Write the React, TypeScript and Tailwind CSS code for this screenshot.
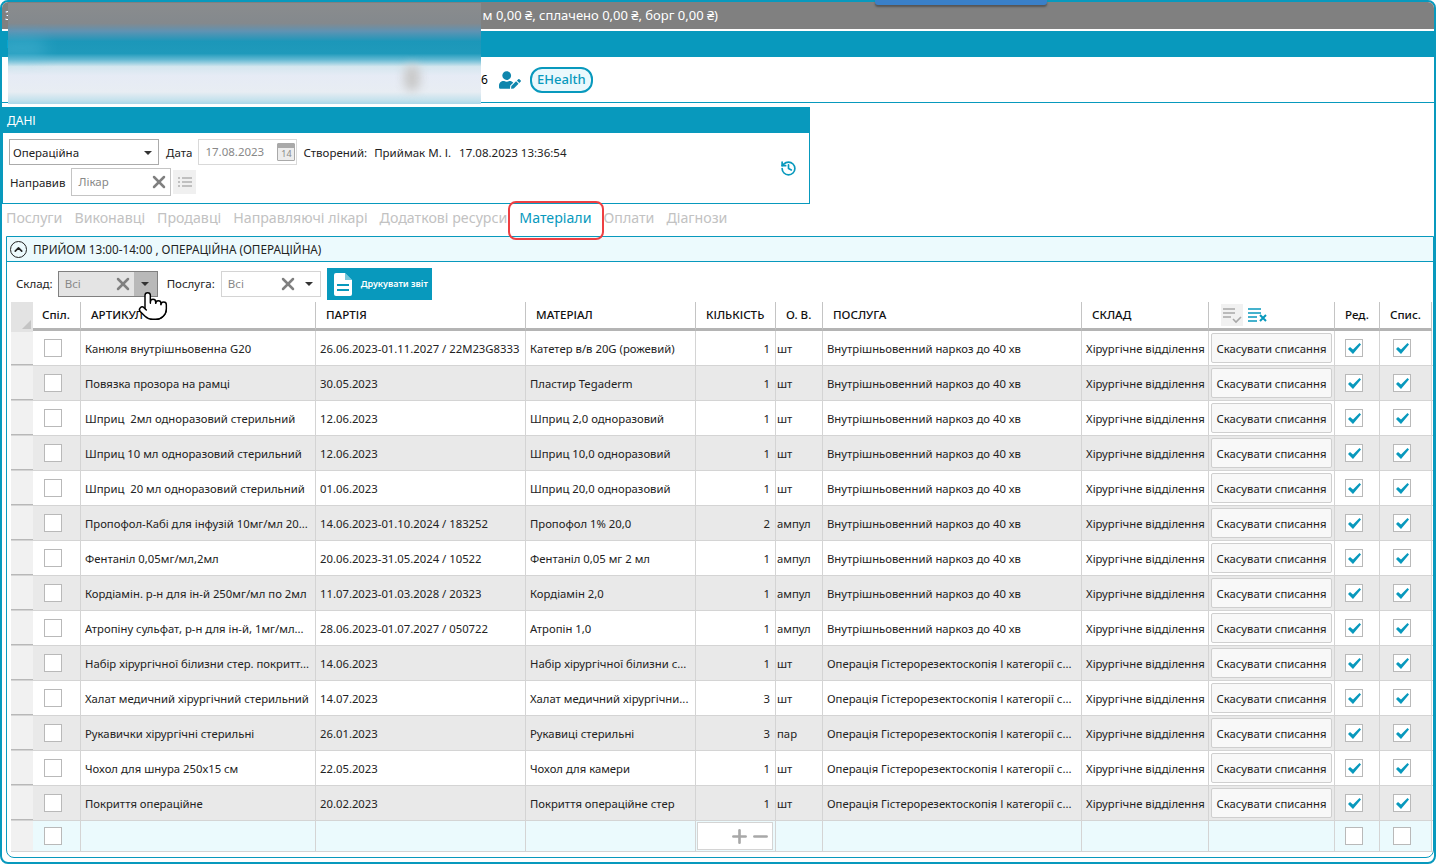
import { Plus, Minus, X, History, Pointer, ChevronUp } from "lucide-react";
import { FaUserEdit } from "react-icons/fa";

const GRID =
  "grid grid-cols-[22px_48px_235px_210px_170px_80px_47px_259px_127px_126px_45px_52px]";

type Row = [string, string, string, string, string, string];

const S1 = "Внутрішньовенний наркоз до 40 хв";
const S2 = "Операція Гістерорезектоскопія І категорії с...";

const rows: Row[] = [
  ["Канюля внутрішньовенна G20", "26.06.2023-01.11.2027 / 22M23G8333", "Катетер в/в 20G (рожевий)", "1", "шт", S1],
  ["Повязка прозора на рамці", "30.05.2023", "Пластир Tegaderm", "1", "шт", S1],
  ["Шприц  2мл одноразовий стерильний", "12.06.2023", "Шприц 2,0 одноразовий", "1", "шт", S1],
  ["Шприц 10 мл одноразовий стерильний", "12.06.2023", "Шприц 10,0 одноразовий", "1", "шт", S1],
  ["Шприц  20 мл одноразовий стерильний", "01.06.2023", "Шприц 20,0 одноразовий", "1", "шт", S1],
  ["Пропофол-Кабі для інфузій 10мг/мл 20...", "14.06.2023-01.10.2024 / 183252", "Пропофол 1% 20,0", "2", "ампул", S1],
  ["Фентаніл 0,05мг/мл,2мл", "20.06.2023-31.05.2024 / 10522", "Фентаніл 0,05 мг 2 мл", "1", "ампул", S1],
  ["Кордіамін. р-н для ін-й 250мг/мл по 2мл", "11.07.2023-01.03.2028 / 20323", "Кордіамін 2,0", "1", "ампул", S1],
  ["Атропіну сульфат, р-н для ін-й, 1мг/мл...", "28.06.2023-01.07.2027 / 050722", "Атропін 1,0", "1", "ампул", S1],
  ["Набір хірургічної білизни стер. покритт...", "14.06.2023", "Набір хірургічної білизни с...", "1", "шт", S2],
  ["Халат медичний хірургічний стерильний", "14.07.2023", "Халат медичний хірургічни...", "3", "шт", S2],
  ["Рукавички хірургічні стерильні", "26.01.2023", "Рукавиці стерильні", "3", "пар", S2],
  ["Чохол для шнура 250х15 см", "22.05.2023", "Чохол для камери", "1", "шт", S2],
  ["Покриття операційне", "20.02.2023", "Покриття операційне стер", "1", "шт", S2],
];

function CheckBox({ checked }: { checked?: boolean }) {
  return (
    <div className="flex h-[18px] w-[18px] items-center justify-center border border-[#b9b9b9] bg-white">
      {checked && (
        <svg width="13" height="11" viewBox="0 0 13 11">
          <path d="M0 6l2-2 3 2.6L11.5 0 13 1.6 5 11z" fill="#0899bd" />
        </svg>
      )}
    </div>
  );
}

function Cell({ className = "", children }: { className?: string; children?: React.ReactNode }) {
  return (
    <div className={`flex min-w-0 items-center whitespace-pre border-r border-[#d4d4d4] ${className}`}>
      {children}
    </div>
  );
}

function HeaderCell({ className = "", children }: { className?: string; children?: React.ReactNode }) {
  return (
    <div className={`flex items-center whitespace-nowrap border-r border-b-[3px] border-r-[#c4c4c4] border-b-[#b4b4b4] text-[11.6px] font-medium text-[#111] ${className}`}>
      {children}
    </div>
  );
}

function ListCheckIcon() {
  return (
    <svg width="22" height="22" viewBox="0 0 22 22" className="bg-[#f1f1f1]">
      <path d="M2 5h12M2 9h12M2 13h8" stroke="#a8a8a8" strokeWidth="1.6" fill="none" />
      <path d="M12 15l3 3 5-5" stroke="#a8a8a8" strokeWidth="1.6" fill="none" />
    </svg>
  );
}

function ListCrossIcon() {
  return (
    <svg width="20" height="16" viewBox="0 0 20 16">
      <path d="M0 2h13M0 6h13M0 10h9M0 14h9" stroke="#0899bd" strokeWidth="1.6" fill="none" />
      <path d="M12 8l6 6M18 8l-6 6" stroke="#0899bd" strokeWidth="2" fill="none" />
    </svg>
  );
}

function DocIcon() {
  return (
    <svg width="18" height="23" viewBox="0 0 18 23">
      <path d="M2 0h9l7 7v14a2 2 0 0 1-2 2H2a2 2 0 0 1-2-2V2a2 2 0 0 1 2-2z" fill="#fff" />
      <path d="M11 0v7h7" fill="#0899bd" opacity="0.55" />
      <path d="M3 12h12M3 17h12" stroke="#0899bd" strokeWidth="2" />
    </svg>
  );
}

function CalendarIcon() {
  return (
    <div className="relative h-[18px] w-[18px] rounded-[1px] border border-[#a9a9a9] bg-[#ececec]">
      <div className="h-[4px] bg-[#a9a9a9]" />
      <div className="text-center text-[9px] leading-[12px] text-[#8a8a8a]">14</div>
    </div>
  );
}

function DataRow({ row, index }: { row: Row; index: number }) {
  const bg = index % 2 === 1 ? "bg-[#e9e9e9]" : "bg-white";
  return (
    <div className={`${GRID} h-[35px] border-b border-[#d4d4d4] text-[11.3px] text-[#222]`}>
      <div className="border-b border-[#b8b8b8] bg-[#f1f1f1]" />
      <Cell className={`${bg} pl-[11px]`}><CheckBox /></Cell>
      <Cell className={`${bg} pl-[4px] pt-[2px]`}>{row[0]}</Cell>
      <Cell className={`${bg} pl-[4px] pt-[2px]`}>{row[1]}</Cell>
      <Cell className={`${bg} pl-[4px] pt-[2px]`}>{row[2]}</Cell>
      <Cell className={`${bg} justify-end pr-[5px] pt-[2px]`}>{row[3]}</Cell>
      <Cell className={`${bg} pl-[1px] pt-[2px]`}>{row[4]}</Cell>
      <Cell className={`${bg} pl-[4px] pt-[2px]`}>{row[5]}</Cell>
      <Cell className={`${bg} pl-[4px] pt-[2px]`}>Хірургічне відділення</Cell>
      <Cell className={`${bg} pl-[2px]`}>
        <div className="flex h-[30px] w-[121px] items-center justify-center rounded-[2px] border border-[#cfcfcf] bg-[#f8f8f8] pt-[2px]">
          Скасувати списання
        </div>
      </Cell>
      <Cell className={`${bg} pl-[10px]`}><CheckBox checked /></Cell>
      <Cell className={`${bg} pl-[13px]`}><CheckBox checked /></Cell>
    </div>
  );
}

export default function App() {
  return (
    <div className="relative h-[864px] w-[1436px] overflow-hidden bg-white font-['Noto_Sans','Open_Sans',sans-serif] text-[11.5px] text-[#222]">
      <div className="h-full rounded-[8px] border-2 border-[#0899bd]">
        {/* window title */}
        <div className="flex h-[27px] w-full items-center overflow-hidden rounded-t-[6px] bg-[#808080] pl-[3px] text-[13px] text-white">
          <div className="flex w-[713px] shrink-0 justify-between whitespace-nowrap">
            <span>З</span>
            <span>м 0,00 ₴, сплачено 0,00 ₴, борг 0,00 ₴)</span>
          </div>
        </div>
        <div className="mt-[2px] flex h-[26px] items-center bg-[#0899bd] pl-[5px] text-white">П</div>
        <div className="flex h-[46px] items-center border-b border-[#0899bd] pl-[479px]">
          <span className="text-[12px] text-black">6</span>
          <FaUserEdit size={22} className="ml-[11px] text-[#0f86ad]" />
          <div className="ml-[9px] flex h-[26px] w-[63px] items-center justify-center rounded-[12px] border-2 border-[#0899bd] bg-[#eaf8fc] text-[13px] font-medium text-[#0899bd]">
            EHealth
          </div>
        </div>

        {/* data panel */}
        <div className="mt-[4px] w-[808px] border border-[#0899bd]">
          <div className="flex h-[25px] items-center bg-[#0899bd] pl-[4px] text-[12px] text-white">ДАНІ</div>
          <div className="flex h-[70px] justify-between pr-[12px]">
            <div className="flex flex-col pl-[6px] pt-[5px]">
              <div className="flex h-[27px] items-center">
                <div className="flex h-[26px] w-[150px] items-center justify-between border border-[#ababab] pl-[3px] pr-[6px] pt-[2px]">
                  Операційна
                  <span className="border-x-[4px] border-t-[4px] border-x-transparent border-t-[#333]" />
                </div>
                <span className="ml-[7px] pt-[2px]">Дата</span>
                <div className="ml-[6px] flex h-[26px] w-[99px] items-center justify-between border border-[#d9d9d9] pl-[6px] pr-[1px] text-[#888]">
                  17.08.2023
                  <CalendarIcon />
                </div>
                <span className="ml-[6px] pt-[2px]">Створений:</span>
                <span className="ml-[7px] pt-[2px]">Приймак М. І.</span>
                <span className="ml-[8px] pt-[2px]">17.08.2023 13:36:54</span>
              </div>
              <div className="mt-[3px] flex h-[28px] items-center pl-[1px]">
                <span className="pt-[2px]">Направив</span>
                <div className="ml-[6px] flex h-[28px] w-[100px] items-center justify-between border border-[#c4c4c4] pl-[6px] pr-[1px] text-[#888]">
                  Лікар
                  <X size={20} strokeWidth={3} className="text-[#808080]" />
                </div>
                <div className="ml-[2px] flex h-[24px] w-[23px] items-center justify-center bg-[#f0f0f0]">
                  <svg width="14" height="12" viewBox="0 0 14 12">
                    <path d="M4 2h10M4 6h10M4 10h10M0 2h2M0 6h2M0 10h2" stroke="#b0b0b0" strokeWidth="1.3" />
                  </svg>
                </div>
              </div>
            </div>
            <div className="flex items-center">
              <History size={17} strokeWidth={2.4} className="text-[#0899bd]" />
            </div>
          </div>
        </div>

        {/* tabs */}
        <div className="flex h-[32px] items-center gap-[12px] pb-[5px] pl-[4px] text-[14.2px] text-[#c2c2c2]">
          <span>Послуги</span>
          <span>Виконавці</span>
          <span>Продавці</span>
          <span>Направляючі лікарі</span>
          <span>Додаткові ресурси</span>
          <span className="relative text-[#0899bd]">
            Матеріали
            <span className="absolute left-[-11px] right-[-12px] top-[-6px] h-[39px] rounded-[8px] border-2 border-[#ee3f42]" />
          </span>
          <span>Оплати</span>
          <span>Діагнози</span>
        </div>

        {/* group panel */}
        <div className="ml-[4px] h-[622px] rounded-b-[8px] border border-[#0899bd]">
          <div className="flex h-[25px] items-center gap-[6px] border-b border-[#0899bd] bg-[#ecfafd] pl-[3px] text-[11.7px] text-[#222]">
            <div className="flex h-[17px] w-[17px] items-center justify-center rounded-full border border-[#222]">
              <ChevronUp size={13} strokeWidth={3} />
            </div>
            <span className="pt-[2px]">ПРИЙОМ 13:00-14:00 , ОПЕРАЦІЙНА (ОПЕРАЦІЙНА)</span>
          </div>

          <div className="flex h-[40px] items-center pl-[9px] pt-[4px]">
            <span>Склад:</span>
            <div className="ml-[5px] flex h-[26px] w-[100px] items-center border border-[#808080] bg-[#e4e4e4] pl-[6px] text-[#888]">
              <span className="flex-1">Всі</span>
              <X size={20} strokeWidth={3} className="mr-[1px] text-[#808080]" />
              <div className="flex h-full w-[23px] items-center justify-center bg-[#b9b9b9]">
                <span className="border-x-[4px] border-t-[4px] border-x-transparent border-t-[#333]" />
              </div>
            </div>
            <span className="ml-[9px]">Послуга:</span>
            <div className="ml-[6px] flex h-[26px] w-[100px] items-center border border-[#d4d4d4] pl-[6px] pr-[7px] text-[#888]">
              <span className="flex-1">Всі</span>
              <X size={20} strokeWidth={3} className="mr-[7px] text-[#808080]" />
              <span className="border-x-[4px] border-t-[4px] border-x-transparent border-t-[#333]" />
            </div>
            <div className="ml-[6px] flex h-[32px] w-[105px] items-center gap-[9px] bg-[#0899bd] pl-[7px] text-[9px] font-semibold text-white">
              <DocIcon />
              Друкувати звіт
            </div>
          </div>

          <div className="ml-[4px]">
            <div className={`${GRID} h-[29px]`}>
              <div className="relative -mb-[1px] bg-[#e3e3e3]">
                <span className="absolute bottom-[3px] right-[2px] border-b-[9px] border-l-[9px] border-b-[#c4c4c4] border-l-transparent" />
              </div>
              <HeaderCell className="pl-[9px]">Спіл.</HeaderCell>
              <HeaderCell className="pl-[10px]">АРТИКУЛ</HeaderCell>
              <HeaderCell className="pl-[10px]">ПАРТІЯ</HeaderCell>
              <HeaderCell className="pl-[10px]">МАТЕРІАЛ</HeaderCell>
              <HeaderCell className="pl-[10px]">КІЛЬКІСТЬ</HeaderCell>
              <HeaderCell className="pl-[10px]">О. В.</HeaderCell>
              <HeaderCell className="pl-[10px]">ПОСЛУГА</HeaderCell>
              <HeaderCell className="pl-[10px]">СКЛАД</HeaderCell>
              <HeaderCell className="gap-[5px] pl-[12px]">
                <ListCheckIcon />
                <ListCrossIcon />
              </HeaderCell>
              <HeaderCell className="pl-[10px]">Ред.</HeaderCell>
              <HeaderCell className="pl-[10px]">Спис.</HeaderCell>
            </div>

            {rows.map((row, i) => (
              <DataRow key={row[0]} row={row} index={i} />
            ))}

            <div className={`${GRID} h-[31px] border-b border-[#d4d4d4]`}>
              <div className="bg-[#f1f1f1]" />
              <Cell className="bg-[#ebfafd] pl-[11px]"><CheckBox /></Cell>
              <Cell className="bg-[#ebfafd]" />
              <Cell className="bg-[#ebfafd]" />
              <Cell className="bg-[#ebfafd]" />
              <Cell className="bg-[#ebfafd] pl-[1px]">
                <div className="flex h-[28px] w-[76px] items-center justify-end border border-[#d4d4d4] bg-white pr-[1px] text-[#a8a8a8]">
                  <Plus size={21} strokeWidth={3} />
                  <Minus size={21} strokeWidth={3} />
                </div>
              </Cell>
              <Cell className="bg-[#ebfafd]" />
              <Cell className="bg-[#ebfafd]" />
              <Cell className="bg-[#ebfafd]" />
              <Cell className="bg-[#ebfafd]" />
              <Cell className="bg-[#ebfafd] pl-[10px]"><CheckBox /></Cell>
              <Cell className="bg-[#ebfafd] pl-[13px]"><CheckBox /></Cell>
            </div>
          </div>
        </div>
      </div>

      {/* tab of another window peeking in at the top */}
      <div className="absolute left-[875px] top-0 h-[5px] w-[172px] rounded-b-[3px] bg-[#3a80c8] shadow-[0_2px_2px_#555]" />

      {/* blurred patient data */}
      <div className="absolute left-[8px] top-[3px] h-[101px] w-[473px] overflow-hidden bg-[linear-gradient(180deg,#8a8c8e_0%,#84898d_20%,#5f93b3_28%,#1c97b9_38%,#1f9abb_50%,#62b8d2_56%,#d5e7ef_63%,#e6ebf5_72%,#e8edf3_88%,#c6e2ed_96%,#acd7e8_100%)]">
        <div className="absolute left-[-12px] top-[36px] h-[18px] w-[50px] rounded-full bg-[#5cc0de] opacity-40 blur-[8px]" />
        <div className="absolute left-[396px] top-[62px] h-[26px] w-[16px] rounded-full bg-[#c9c9c9] blur-[5px]" />
      </div>

      {/* mouse pointer */}
      <Pointer size={32} fill="#fff" strokeWidth={1.1} className="absolute left-[137px] top-[290px] text-black" />
    </div>
  );
}
